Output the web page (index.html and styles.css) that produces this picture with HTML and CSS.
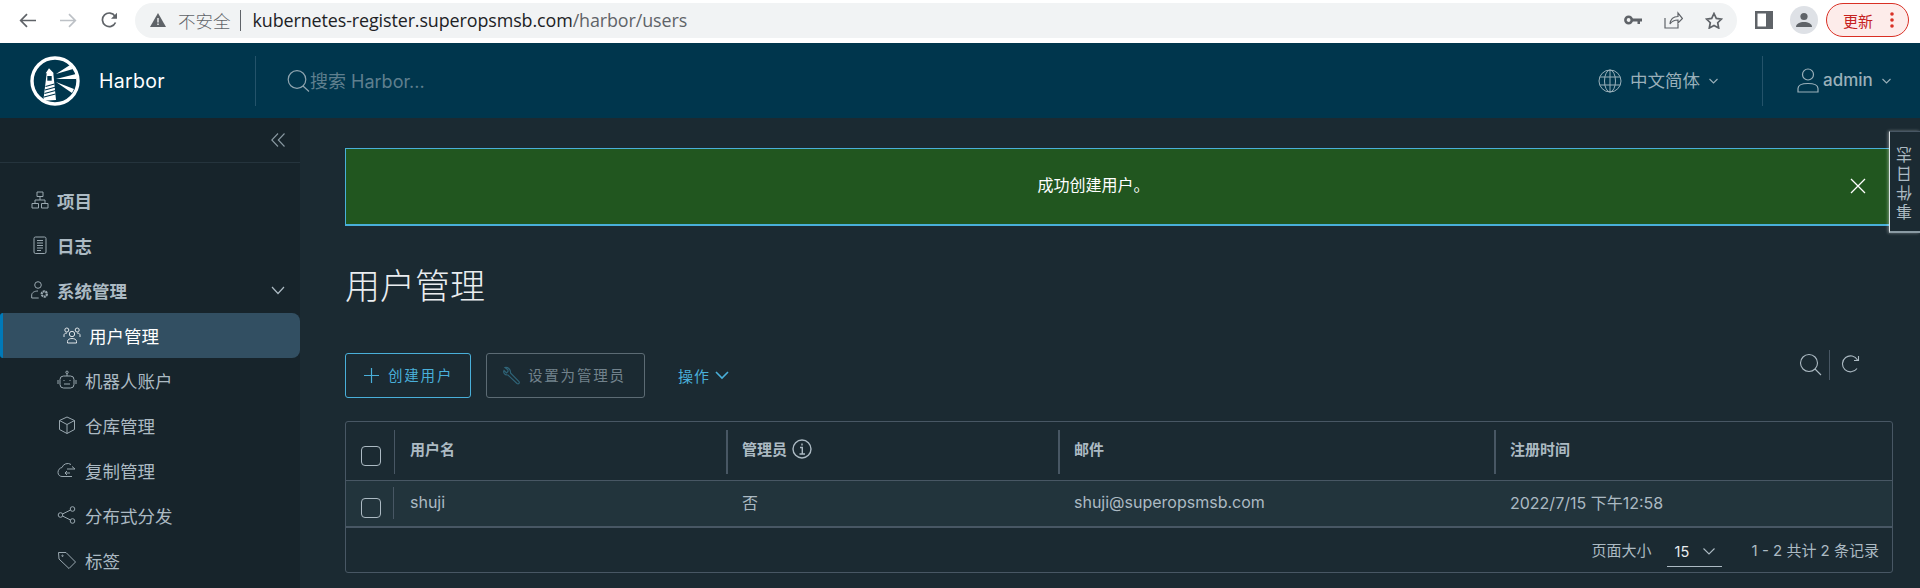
FILE: index.html
```html
<!DOCTYPE html>
<html lang="zh-CN">
<head>
<meta charset="utf-8">
<title>Harbor</title>
<link rel="stylesheet" href="styles.css">
</head>
<body>
<div class="chrome">
  <svg class="ch-nav" width="17" height="15" viewBox="0 0 17 15"><path d="M17 7.500H2M8 1.200 1.700 7.500 8 13.800" fill="none" stroke="#5f6368" stroke-width="1.700"/></svg>
  <svg class="ch-nav fwd" width="17" height="15" viewBox="0 0 17 15"><path d="M0 7.500h15M9 1.200l6.300 6.300L9 13.800" fill="none" stroke="#bdc1c6" stroke-width="1.700"/></svg>
  <svg class="ch-nav rel" width="18" height="16" viewBox="0 0 18 16"><path d="M14.500 10.500A6.800 6.800 0 1 1 14 4.200" fill="none" stroke="#5f6368" stroke-width="1.700"/><path d="M16 .7v6H10z" fill="#5f6368"/></svg>
  <div class="omni">
    <svg width="16" height="14" viewBox="0 0 16 14"><path d="M8 0l8 14H0z" fill="#5f6368"/><path d="M7.300 5h1.400v4.500H7.300zM7.300 10.500h1.400v1.400H7.300z" fill="#f1f3f4"/></svg>
    <span class="insecure">不安全</span>
    <span class="omni-sep"></span>
    <span class="url">kubernetes-register.superopsmsb.com<span class="url-path">/harbor/users</span></span>
    <span class="grow"></span>
    <svg class="omni-ic" width="18" height="10" viewBox="0 0 18 10"><circle cx="4.6" cy="5" r="3.2" fill="none" stroke="#5f6368" stroke-width="2.6"/><path d="M8 3.5h10v3h-2v2.5h-2.5V6.500H8z" fill="#5f6368"/></svg>
    <svg class="omni-ic" width="19" height="18" viewBox="0 0 19 18"><path d="M1 7v10h13v-4M6 13c.5-5 4-7.500 8-7.500V2l4.500 5.500L14 12V9c-3 0-6 1-8 4z" fill="none" stroke="#5f6368" stroke-width="1.2"/></svg>
    <svg class="omni-ic" width="18" height="17" viewBox="0 0 18 17"><path d="M9 1.500l2.300 4.900 5.200.7-3.800 3.600 1 5.300L9 13.400l-4.700 2.600 1-5.300L1.500 7.100l5.200-.7z" fill="none" stroke="#5f6368" stroke-width="1.700"/></svg>
  </div>
  <svg class="panel" width="18" height="18" viewBox="0 0 18 18"><path d="M0 0h18v18H0z" fill="#5f6368"/><path d="M2.500 2.500h8.500v13H2.500z" fill="#fff"/></svg>
  <svg class="avatar" width="28" height="28" viewBox="0 0 28 28"><circle cx="14" cy="14" r="14" fill="#dee1e6"/><circle cx="14" cy="10.500" r="3.600" fill="#5f6368"/><path d="M6 21c0-3.500 4-5 8-5s8 1.500 8 5z" fill="#5f6368"/></svg>
  <div class="update"><span>更新</span><svg width="4" height="16" viewBox="0 0 4 16"><circle cx="2" cy="2" r="1.800"/><circle cx="2" cy="8" r="1.800"/><circle cx="2" cy="14" r="1.800"/></svg></div>
</div>

<header class="top">
  <div class="brand">
    <svg width="50" height="50" viewBox="0 0 50 50"><circle cx="25" cy="25" r="23" fill="none" stroke="#fff" stroke-width="3.400"/><path d="M13.300 44.700 16.700 17.300h-1L19 12.300l4.800 5h-.5L26 44z" fill="#fff"/><path d="M17.300 20h4.400v4.700h-4.400z" fill="#00364d"/><path d="M15.500 30.500l9-2.500M15 34l10-2.800M14.500 37.500l11-3M14 41l11.500-3" stroke="#00364d" stroke-width="1.100"/><path d="M26 18 40 9l3 4zM26 23l20-5v5zM26 26l18 7-2 4z" fill="#fff"/></svg>
    <span class="brand-name">Harbor</span>
  </div>
  <div class="search">
    <svg width="23" height="22" viewBox="0 0 23 22"><circle cx="10" cy="9.500" r="8.800" fill="none" stroke="#8fa5b0" stroke-width="1.200"/><path d="M16 16l6 5.500" stroke="#8fa5b0" stroke-width="1.200"/></svg>
    <span>搜索 Harbor...</span>
  </div>
  <span class="grow"></span>
  <div class="lang">
    <svg width="24" height="24" viewBox="0 0 24 24" fill="none" stroke="#9ab0ba" stroke-width="1"><circle cx="12" cy="12" r="11"/><ellipse cx="12" cy="12" rx="5.500" ry="11"/><path d="M12 1v22M2 8h20M2 16h20"/></svg>
    <span>中文简体</span>
    <svg class="hdr-chev" width="9" height="6" viewBox="0 0 9 6"><path d="M.5 1l4 4 4-4" fill="none" stroke="#9ab0ba" stroke-width="1.100"/></svg>
  </div>
  <div class="user">
    <svg width="22" height="25" viewBox="0 0 22 25" fill="none" stroke="#9ab0ba" stroke-width="1.200"><circle cx="11" cy="6.500" r="5.500"/><path d="M1 24v-3.500c0-3 4-5 10-5s10 2 10 5V24z"/></svg>
    <span>admin</span>
    <svg class="hdr-chev" width="9" height="6" viewBox="0 0 9 6"><path d="M.5 1l4 4 4-4" fill="none" stroke="#9ab0ba" stroke-width="1.100"/></svg>
  </div>
</header>

<div class="body">
  <nav class="side">
    <div class="collapse">
      <svg width="14" height="14" viewBox="0 0 14 14"><path d="M7 .5.800 7 7 13.500M13.500.5 7.300 7l6.200 6.500" fill="none" stroke="#8a9aa3" stroke-width="1.100"/></svg>
    </div>
    <ul class="menu">
      <li class="item bold">
        <svg width="18" height="18" viewBox="0 0 18 18" fill="none" stroke="#9aa8b0" stroke-width="1"><path d="M6 1h6v4.500H6zM1 12.500h6.500V17H1zM10.500 12.500H17V17h-6.500zM9 5.500V9M4 12.500V9h10v3.500"/></svg>
        <span>项目</span>
      </li>
      <li class="item bold">
        <svg width="18" height="18" viewBox="0 0 18 18" fill="none" stroke="#9aa8b0" stroke-width="1"><rect x="3" y="1" width="12" height="16.500" rx="1.500"/><path d="M6 4.500h6M6 7h6M6 9.500h6M6 12h6M6 14.500h4"/></svg>
        <span>日志</span>
      </li>
      <li class="item bold">
        <svg width="18" height="18" viewBox="0 0 18 18" fill="none" stroke="#9aa8b0" stroke-width="1"><circle cx="7" cy="4" r="3.300"/><path d="M.700 17v-3c0-2.500 3-4 6.300-4M.700 17h7"/><circle cx="13.300" cy="13" r="2.600" stroke-width="2.200" stroke-dasharray="2 .6"/></svg>
        <span>系统管理</span>
        <svg class="item-chev" width="14" height="9" viewBox="0 0 14 9"><path d="M1 1l6 6.500L13 1" fill="none" stroke="#acbac3" stroke-width="1.200"/></svg>
      </li>
      <li class="item sub active">
        <svg width="18" height="18" viewBox="0 0 18 18" fill="none" stroke="#dfe5e8" stroke-width="1"><circle cx="9" cy="8" r="2.700"/><path d="M4.500 17v-1.500c0-2 2-3 4.500-3s4.500 1 4.500 3V17z"/><circle cx="3.800" cy="4" r="2"/><circle cx="14.200" cy="4" r="2"/><path d="M1 11V9c0-1 1-2 3-2M17 11V9c0-1-1-2-3-2"/></svg>
        <span>用户管理</span>
      </li>
      <li class="item sub">
        <svg width="20" height="20" viewBox="0 0 20 20" fill="none" stroke="#9aa8b0" stroke-width="1"><rect x="3" y="6" width="14" height="12" rx="3.500"/><path d="M10 6V3.500"/><circle cx="10" cy="2.300" r="1.200"/><path d="M1 10v4M19 10v4M7 14h6M6.500 10.500h1M12.500 10.500h1"/></svg>
        <span>机器人账户</span>
      </li>
      <li class="item sub">
        <svg width="20" height="20" viewBox="0 0 20 20" fill="none" stroke="#9aa8b0" stroke-width="1"><path d="M10 2l7.500 3.500v9L10 18.500l-7.500-4v-9zM2.500 5.500 10 9.500l7.500-4M10 9.500v9"/></svg>
        <span>仓库管理</span>
      </li>
      <li class="item sub">
        <svg width="20" height="18" viewBox="0 0 20 18" fill="none" stroke="#9aa8b0" stroke-width="1"><path d="M14 3.500A6 6 0 0 0 5 6.500c-2.500.5-4 2.500-4 5 0 2.500 2 4 4 4h10M18 8h-8M15 5.500 18 8M13 12H8M10 10l-2 2 2 2"/></svg>
        <span>复制管理</span>
      </li>
      <li class="item sub">
        <svg width="20" height="20" viewBox="0 0 20 20" fill="none" stroke="#9aa8b0" stroke-width="1"><circle cx="15.500" cy="4" r="2.300"/><circle cx="3.500" cy="10" r="2.300"/><circle cx="15.500" cy="16" r="2.300"/><path d="M13.500 5 5.500 9M5.500 11l8 4"/></svg>
        <span>分布式分发</span>
      </li>
      <li class="item sub">
        <svg width="20" height="20" viewBox="0 0 20 20" fill="none" stroke="#9aa8b0" stroke-width="1"><path d="M1.500 2.500h7.500l9.500 9.500-6.500 6.500L2 9z" stroke-linejoin="round"/><circle cx="5.500" cy="5.800" r=".7"/></svg>
        <span>标签</span>
      </li>
    </ul>
  </nav>

  <main class="content">
    <div class="alert">
      <span>成功创建用户。</span>
      <svg class="alert-x" width="16" height="16" viewBox="0 0 16 16"><path d="M1 1l14 14M15 1 1 15" stroke="#fff" stroke-width="1.300"/></svg>
    </div>
    <h1 class="title">用户管理</h1>
    <div class="actions">
      <div class="btn primary">
        <svg width="15" height="15" viewBox="0 0 15 15"><path d="M7.500 0v15M0 7.500h15" stroke="#49afd9" stroke-width="1.200"/></svg>
        <span>创建用户</span>
      </div>
      <div class="btn disabled">
        <svg width="19" height="19" viewBox="0 0 19 19" fill="none" stroke="#2f6478" stroke-width="1.100"><path d="M3 1.500l3 2.500v1.500L4.500 7 2 4.500c-1 2 .5 5 4 4.500l9 8.500c1.500 1 3-.5 2-2L8.500 7c.5-3.500-2.500-6-5.500-5.500z"/></svg>
        <span>设置为管理员</span>
      </div>
      <div class="ops">
        <span>操作</span>
        <svg width="14" height="9" viewBox="0 0 14 9"><path d="M1 1l6 6 6-6" fill="none" stroke="#49afd9" stroke-width="1.600"/></svg>
      </div>
      <span class="grow"></span>
      <div class="tools">
        <svg width="23" height="23" viewBox="0 0 23 23"><circle cx="10" cy="10" r="8.500" fill="none" stroke="#acbac3" stroke-width="1.100"/><path d="M16 16l6 6" stroke="#acbac3" stroke-width="1.100"/></svg>
        <span class="tool-sep"></span>
        <svg width="19" height="19" viewBox="0 0 19 19"><path d="M16 13.500A8 8 0 1 1 16.500 5M17.500 1v4.500H13" fill="none" stroke="#acbac3" stroke-width="1.100"/></svg>
      </div>
    </div>
    <div class="grid">
      <div class="row head">
        <div class="c-check"><span class="check"></span></div>
        <div class="cell">用户名</div>
        <div class="cell">管理员<svg class="info" width="20" height="20" viewBox="0 0 20 20" fill="none" stroke="#acbac3" stroke-width="1.400"><circle cx="10" cy="10" r="9"/><path d="M8 8.500h2.300V15M7.500 15h5.500M10 4.500v2" /></svg></div>
        <div class="cell">邮件</div>
        <div class="cell">注册时间</div>
      </div>
      <div class="row data">
        <div class="c-check"><span class="check"></span></div>
        <div class="cell">shuji</div>
        <div class="cell">否</div>
        <div class="cell">shuji@superopsmsb.com</div>
        <div class="cell">2022/7/15 下午12:58</div>
      </div>
      <div class="foot">
        <span>页面大小</span>
        <div class="size"><span>15</span><svg width="12" height="7" viewBox="0 0 12 7"><path d="M.5.500 6 6 11.500.500" fill="none" stroke="#acbac3" stroke-width="1.100"/></svg></div>
        <span class="count">1 - 2 共计 2 条记录</span>
      </div>
    </div>
  </main>
</div>
<div class="event-tab"><span>事件日志</span></div>
</body>
</html>
```

FILE: styles.css
```css
* { box-sizing: border-box; }
html, body { margin: 0; height: 588px; overflow: hidden; }
body { font-family: "Inter", "Noto Sans CJK SC", sans-serif; background: #1b2a32; color: #acbac3; }
.grow { flex: 1; }
svg { display: block; flex: none; }

.chrome { height: 43px; background: #fff; display: flex; align-items: center; padding: 0 11px 3px 19px; }
.ch-nav { margin-right: 24px; }
.ch-nav.rel { margin-right: 16px; }
.omni { width: 1602px; height: 35px; border-radius: 18px; background: #f1f3f4; display: flex; align-items: center; padding: 0 14px 0 15px; }
.insecure { margin-left: 12px; font-size: 17.500px; color: #5f6368; font-family: "Noto Sans CJK SC", sans-serif; font-weight: 300; }
.omni-sep { width: 1px; height: 21px; background: #5f6368; margin: 0 12px 0 9px; }
.url { font-family: "Open Sans", "Liberation Sans", sans-serif; font-size: 17.900px; letter-spacing: -.1px; color: #202124; }
.url-path { color: #5f6368; }
.omni-ic { margin-left: 22px; }
.panel { margin-left: 18px; }
.avatar { margin-left: 17px; }
.update { margin-left: 8px; width: 83px; height: 34px; border: 1px solid #d93025; border-radius: 17px; background: #fdecea; color: #c5221f; display: flex; align-items: center; justify-content: space-between; padding: 0 14px 0 16px; font-size: 15px; font-family: "Noto Sans CJK SC", sans-serif; }
.update svg { fill: #d93025; }

.top { height: 75px; background: #00364d; display: flex; align-items: center; }
.brand { width: 256px; height: 50px; border-right: 1px solid #24536a; display: flex; align-items: center; padding-left: 30px; }
.brand-name { margin-left: 19px; font-size: 19.500px; letter-spacing: .3px; color: #fff; }
.search { margin-left: 31px; display: flex; align-items: center; font-size: 18px; color: #5f7f8e; }
.search span { padding-bottom: 1px; }
.lang { display: flex; align-items: center; color: #9ab0ba; font-size: 17.500px; }
.lang span { margin-left: 8px; padding-bottom: 2px; }
.hdr-chev { margin-left: 9px; }
.user { width: 158px; height: 50px; margin-left: 44px; border-left: 1px solid #24536a; padding-left: 34px; display: flex; align-items: center; color: #9ab0ba; font-size: 17px; font-weight: 500; }
.user span { margin-left: 4px; padding-bottom: 2px; }

.body { display: flex; height: 470px; }
.side { width: 300px; background: #17242b; flex: none; }
.collapse { height: 45px; border-bottom: 1px solid #25343d; display: flex; align-items: center; justify-content: flex-end; padding-right: 15px; }
.menu { list-style: none; margin: 0; padding: 15px 0 0; }
.item { height: 45px; display: flex; align-items: center; padding: 0 0 1px 30px; font-size: 17.500px; color: #acbac3; gap: 8px; }
.item.bold { font-weight: 700; padding-left: 31px; }
.item.sub { padding-left: 57px; gap: 8px; }
.item-chev { margin-left: auto; margin-right: 15px; }
.item.active { background: #324f62; color: #fff; border-radius: 3px 8px 8px 3px; border-left: 3px solid #0079b8; padding-left: 60px; }

.content { flex: 1; padding: 30px 27px 0 45px; }
.alert { position: relative; height: 78px; padding: 0 52px 6px 0; background: #21561f; border: 1px solid #49afd9; border-bottom-width: 2px; border-right: 0; color: #fff; font-size: 16px; display: flex; align-items: center; justify-content: center; }
.alert-x { position: absolute; right: 27px; top: 29px; }
.title { margin: 37px 0 0; height: 50px; font-size: 35px; line-height: 46px; font-weight: 300; color: #eaedf0; }
.actions { margin-top: 40px; height: 45px; display: flex; align-items: center; }
.btn { height: 45px; border: 1px solid #49afd9; border-radius: 3px; display: flex; align-items: center; font-size: 14.500px; letter-spacing: 1.800px; color: #49afd9; }
.btn span { padding-bottom: 2px; }
.btn.primary { width: 126px; padding-left: 18px; gap: 9px; }
.btn.disabled { width: 159px; margin-left: 15px; padding-left: 15px; gap: 7px; border-color: #5c6b74; color: #72828c; }
.ops { margin-left: 33px; display: flex; align-items: center; gap: 5px; color: #49afd9; font-size: 15px; letter-spacing: 1px; }
.tools { display: flex; align-items: center; margin-right: 33px; margin-top: -22px; }
.tool-sep { width: 1px; height: 30px; background: #485764; margin: 0 11px 0 7px; }

.grid { margin-top: 23px; height: 152px; border: 1px solid #485764; border-radius: 3px; }
.row { display: grid; grid-template-columns: 48px 332px 332px 436px 1fr; }
.row.head { height: 59px; border-bottom: 1px solid #485764; font-size: 15px; font-weight: 700; }
.row.data { height: 47px; border-bottom: 2px solid #485764; background: #22343c; font-size: 16px; }
.c-check { display: flex; align-items: flex-end; padding-left: 15px; position: relative; }
.head .c-check { padding-bottom: 14px; }
.data .c-check { padding-bottom: 8px; }
.check { width: 20px; height: 20px; border: 1px solid #acbac3; border-radius: 4px; display: block; }
.head .c-check::after { content: ""; position: absolute; right: -1px; top: 8px; width: 1px; height: 44px; background: #485764; }
.data .c-check::after { content: ""; position: absolute; right: 0; top: 6px; width: 1px; height: 32px; background: #485764; }
.cell { display: flex; align-items: center; padding-left: 16px; padding-bottom: 3px; white-space: nowrap; position: relative; }
.head .cell { padding-bottom: 5px; }
.head .cell + .cell::before { content: ""; position: absolute; left: 0; top: 8px; width: 2px; height: 44px; background: #485764; }
.info { margin-left: 5px; }
.foot { height: 44px; display: flex; align-items: center; justify-content: flex-end; font-size: 15px; padding: 0 13px 1px 0; }
.size { width: 55px; height: 30px; margin: 5px 0 0 15px; padding: 0 7px 0 8px; border-bottom: 1px solid #acbac3; display: flex; align-items: center; justify-content: space-between; color: #eaedf0; font-size: 14.500px; }
.count { margin-left: 30px; }

.event-tab { position: absolute; left: 1889px; top: 131px; width: 31px; height: 102px; background: #1b2a32; border-left: 1px solid #dfe5e8; border-top: 1px solid #485764; border-bottom: 2px solid #8a9aa3; box-shadow: -1px 0 3px rgba(255,255,255,.4); display: flex; align-items: center; justify-content: center; }
.event-tab span { writing-mode: vertical-rl; transform: rotate(180deg); font-size: 16px; letter-spacing: 3px; color: #acbac3; }
```
